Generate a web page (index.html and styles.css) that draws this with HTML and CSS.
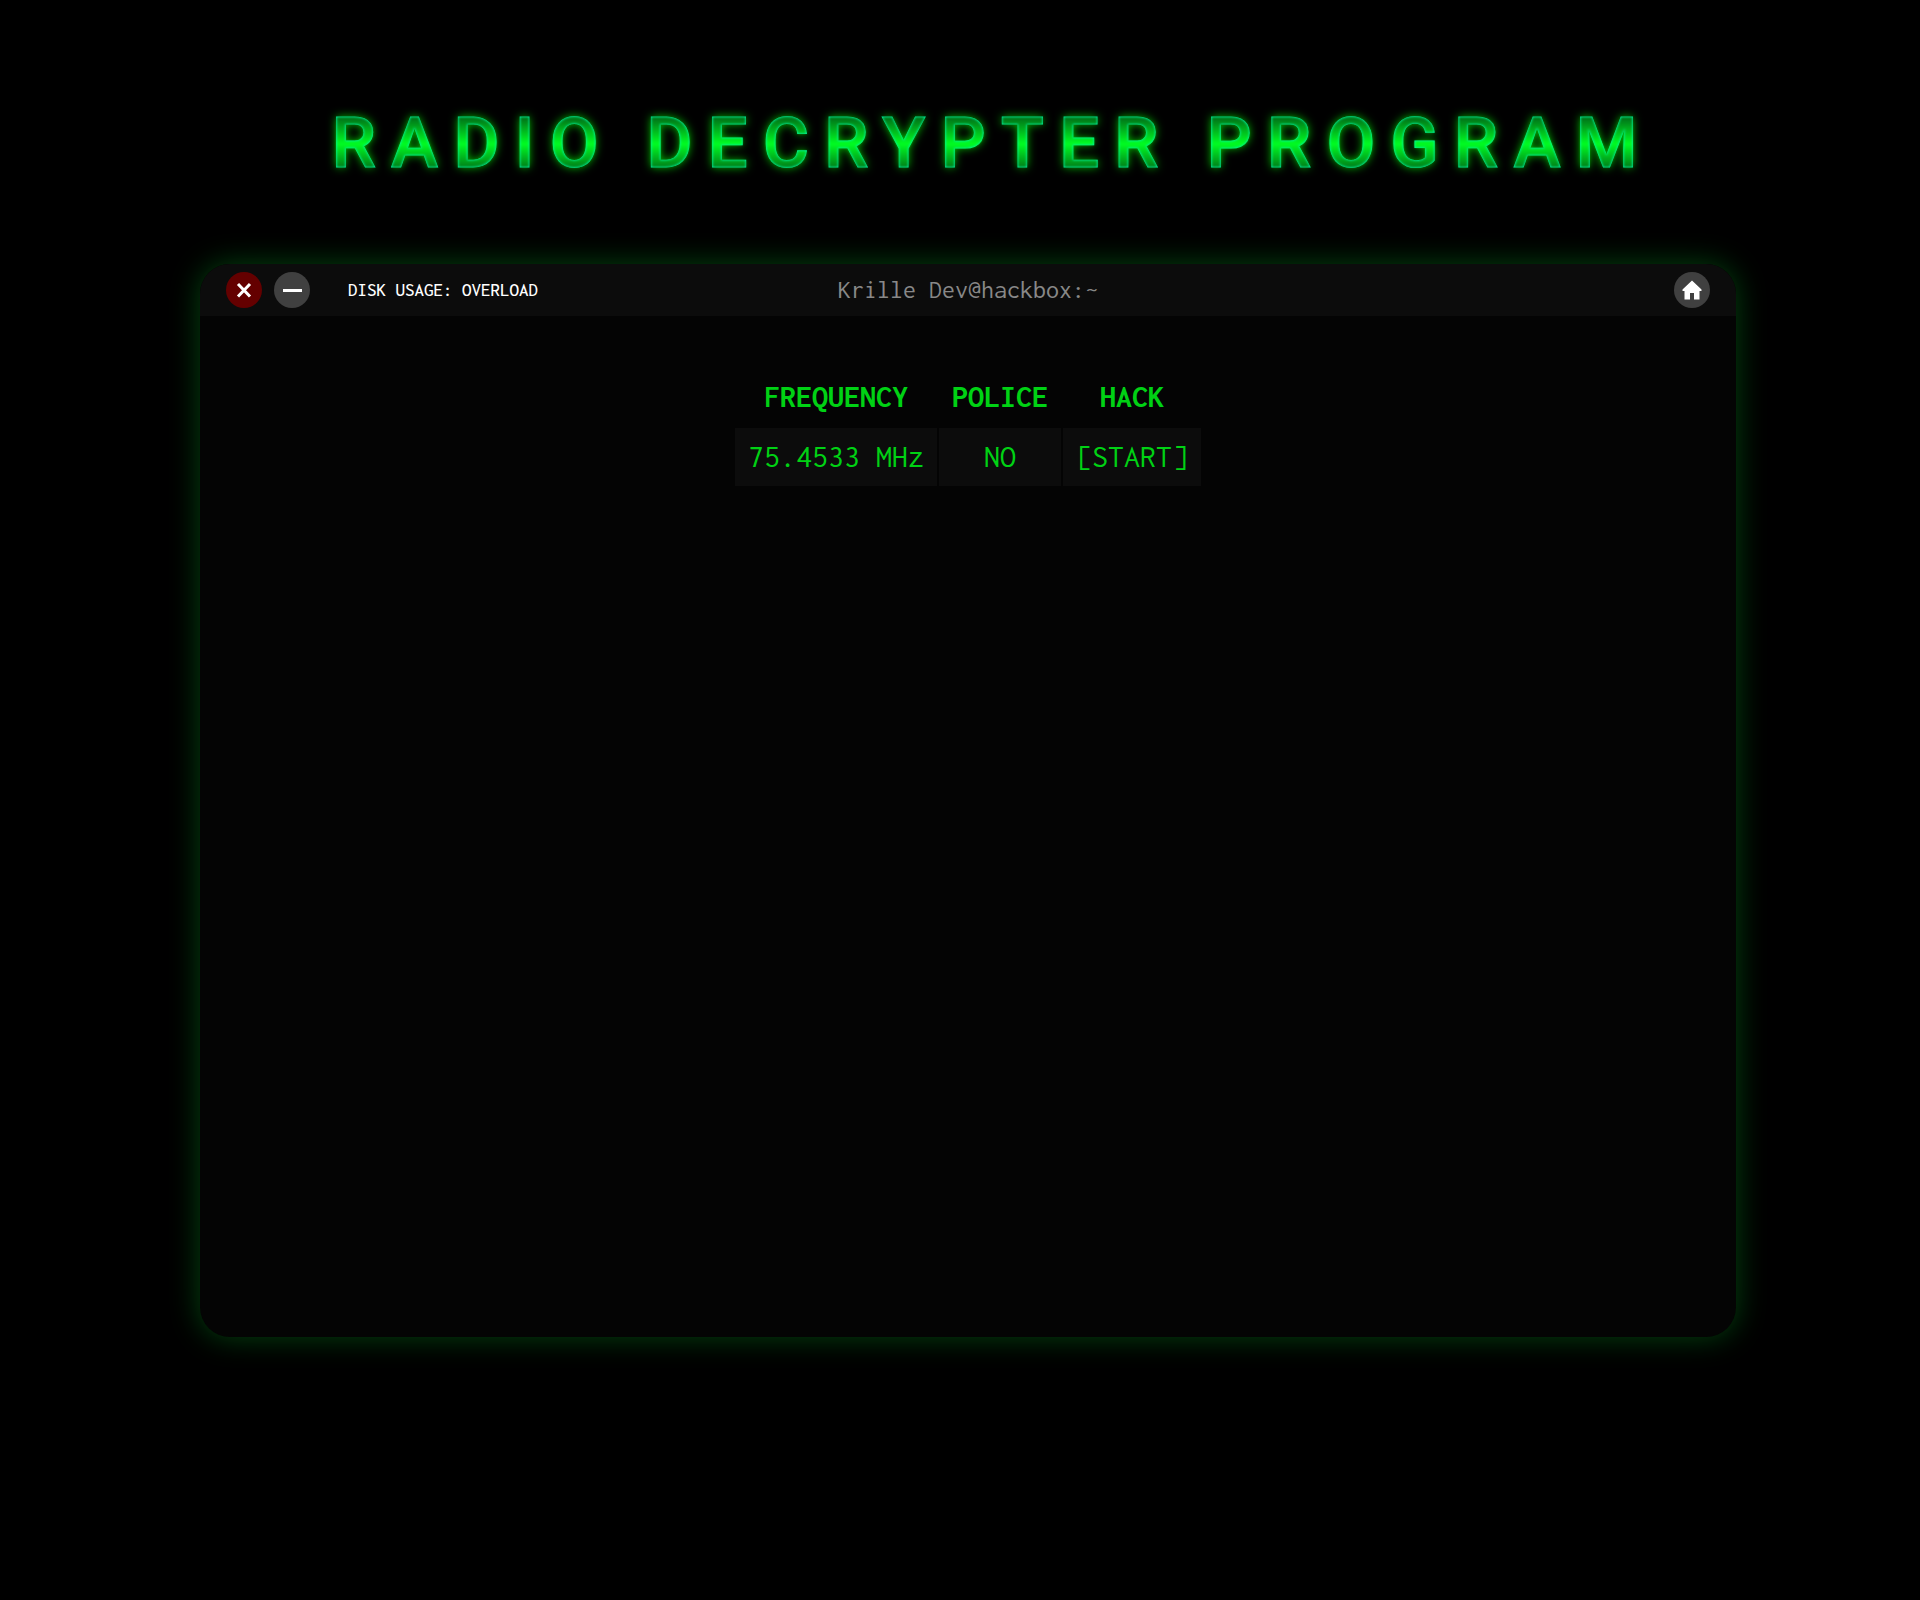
FILE: index.html
```
<!DOCTYPE html>
<html lang="en">
    <head>
        <meta charset="UTF-8">
        <title>Radio Decrypter</title>
        <link rel="stylesheet" href="styles.css">
    </head>
    <body>
        <h1 class="title" data-text="RADIO DECRYPTER PROGRAM">RADIO DECRYPTER PROGRAM</h1>

        <main class="window">
            <header class="topbar">
                <div class="left">
                    <button class="round-btn close" aria-label="Close">
                        <svg viewBox="0 0 36 36"><path d="M12 12l12 12.500M24 12l-12 12.500"/></svg>
                    </button>
                    <button class="round-btn" aria-label="Minimize">
                        <svg viewBox="0 0 36 36"><path d="M9 18.500h19"/></svg>
                    </button>
                    <span class="disk">DISK USAGE: OVERLOAD</span>
                </div>
                <span class="user">Krille Dev@hackbox:~</span>
                <div class="right">
                    <button class="round-btn home" aria-label="Home">
                        <svg viewBox="0 0 36 36"><path d="M18 8.500l9.500 9v1.500h-2v8.500h-5.500v-6.500h-4v6.500h-5.500v-8.500h-2v-1.500z"/></svg>
                    </button>
                </div>
            </header>

            <table class="radio-table">
                <thead>
                    <tr>
                        <th>FREQUENCY</th>
                        <th>POLICE</th>
                        <th>HACK</th>
                    </tr>
                </thead>
                <tbody>
                    <tr>
                        <td>75.4533 MHz</td>
                        <td>NO</td>
                        <td><button class="start">[START]</button></td>
                    </tr>
                </tbody>
            </table>
        </main>
    </body>
</html>
```
FILE: styles.css
```
body {
    box-sizing: border-box;
    min-height: 100vh;
    margin: 0;
    padding: 101px 8px 80px;
    background-color: black;
    color: white;
    font-family: Inconsolata, "Noto Sans Mono CJK JP", "Liberation Mono", monospace;
}

.title {
    position: relative;
    margin: 0 0 79px;
    padding-left: 64px;
    text-align: center;
    font-family: Roboto, sans-serif;
    font-size: 71px;
    line-height: 84px;
    font-weight: 500;
    letter-spacing: 15px;
    color: #00f5aa;
    -webkit-text-stroke: 1px #00f5aa;
    text-shadow: 0 0 10px rgba(0, 255, 0, 0.8);
}

/* gradient core, soft at the edges so the outline glows inward */
.title::after {
    content: attr(data-text);
    position: absolute;
    inset: 0;
    padding-left: 64px;
    color: transparent;
    background: linear-gradient(#006e0a 22%, #00ff14 51%, #006e0a 80%);
    -webkit-background-clip: text;
    background-clip: text;
    -webkit-text-stroke: 0;
    text-shadow: none;
    filter: blur(1px);
    opacity: 0.9;
}

.window {
    width: 80vw;
    min-height: 1073px;
    margin-left: 10vw;
    border-radius: 30px;
    background-color: #040404;
    box-shadow: 0 0 30px rgba(10, 225, 50, 0.3);
    overflow: hidden;
}

.topbar {
    display: grid;
    grid-template-columns: 1fr auto 1fr;
    align-items: center;
    height: 52px;
    padding: 0 26px;
    background-color: #0c0c0c;
}

.left {
    display: flex;
    align-items: center;
    gap: 12px;
}

.right {
    display: flex;
    justify-content: flex-end;
}

.round-btn {
    width: 36px;
    height: 36px;
    padding: 0;
    border: none;
    border-radius: 50%;
    background-color: #404040;
    cursor: pointer;
}

.round-btn svg {
    display: block;
    fill: none;
    stroke: white;
    stroke-width: 3;
}

.round-btn.home svg {
    fill: white;
    stroke: none;
}

.round-btn.close {
    background-color: #640000;
}

.disk {
    margin-left: 26px;
    font-size: 19px;
    font-weight: 500;
}

.user {
    font-size: 26px;
    line-height: 28px;
    color: #888;
}

.radio-table {
    margin: 50px auto 0;
    font-size: 32px;
    line-height: 34px;
    color: #00d214;
    text-align: center;
    border-spacing: 2px;
}

.radio-table th,
.radio-table td {
    padding: 12px 13px;
}

.radio-table td {
    background-color: #0c0c0c;
}

.start {
    padding: 0;
    border: none;
    background: none;
    color: inherit;
    font: inherit;
    cursor: pointer;
}
```
